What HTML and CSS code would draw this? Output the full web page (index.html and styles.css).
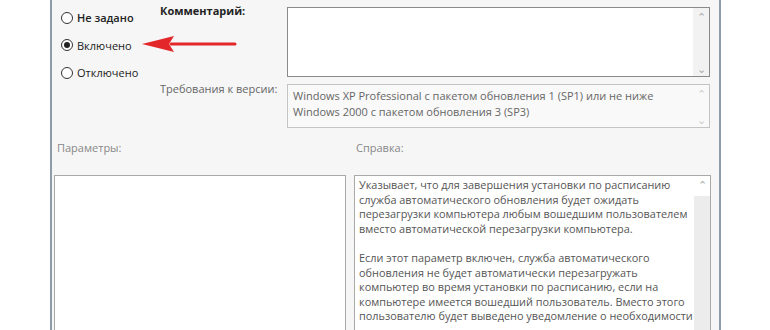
FILE: index.html
```html
<!DOCTYPE html>
<html lang="ru">
<head>
<meta charset="utf-8">
<link rel="stylesheet" href="styles.css">
</head>
<body>
<div class="dialog">
  <div class="top">
    <div class="radios">
      <label class="radio bold"><span class="dot"></span>Не задано</label>
      <label class="radio"><span class="dot on"></span>Включено</label>
      <label class="radio"><span class="dot"></span>Отключено</label>
    </div>
    <div class="fields">
      <div class="row row-comment">
        <div class="flabel bold">Комментарий:</div>
        <div class="box comment">
          <div class="box-body"></div>
          <div class="sbar"><span class="up">&#8963;</span><span class="down">&#8964;</span></div>
        </div>
      </div>
      <div class="row row-version">
        <div class="flabel">Требования к версии:</div>
        <div class="box version">
          <div class="box-body vtext">Windows XP Professional с пакетом обновления 1 (SP1) или не ниже<br>Windows 2000 с пакетом обновления 3 (SP3)</div>
          <div class="sbar light"><span class="up">&#8963;</span><span class="down">&#8964;</span></div>
        </div>
      </div>
    </div>
  </div>
  <div class="lower">
    <div class="col col-params">
      <div class="sec-label">Параметры:</div>
      <div class="box params"></div>
    </div>
    <div class="col col-help">
      <div class="sec-label">Справка:</div>
      <div class="box help">
        <div class="box-body htext">
          <p>Указывает, что для завершения установки по расписанию служба автоматического обновления будет ожидать перезагрузки компьютера любым вошедшим пользователем вместо автоматической перезагрузки компьютера.</p>
          <p>Если этот параметр включен, служба автоматического обновления не будет автоматически перезагружать компьютер во время установки по расписанию, если на компьютере имеется вошедший пользователь. Вместо этого пользователю будет выведено уведомление о необходимости</p>
        </div>
        <div class="sbar track"><span class="up">&#8963;</span></div>
      </div>
    </div>
  </div>
  <svg class="arrow" width="96" height="20" viewBox="0 0 96 20">
    <path d="M30 10 L94 10" stroke="#e3262a" stroke-width="3" stroke-linecap="round"/>
    <path d="M1 10 L33 2 L28 10 L33 18 Z" fill="#e3262a"/>
  </svg>
</div>
</body>
</html>
```
FILE: styles.css
```css
html, body {
  margin: 0;
  padding: 0;
  background: #ffffff;
}
body {
  width: 770px;
  height: 330px;
  overflow: hidden;
  font-family: "Open Sans", "Noto Sans", sans-serif;
  font-size: 11px;
  color: #333;
}
.dialog {
  position: relative;
  margin-left: 50px;
  width: 667px;
  height: 330px;
  overflow: hidden;
  border-left: 2px solid #8e9caa;
  border-right: 2px solid #8e9caa;
  background: #f6f6f6;
}
.top {
  display: flex;
}
.radios {
  width: 108px;
  display: flex;
  flex-direction: column;
  gap: 10.5px;
  padding-top: 9px;
  padding-left: 9px;
  box-sizing: border-box;
}
.radio {
  display: flex;
  align-items: center;
  gap: 4px;
  height: 17px;
  color: #222;
  white-space: nowrap;
}
.bold { font-weight: 700; }
.radio.bold { font-weight: 600; }
.dot {
  width: 10px;
  height: 10px;
  border: 1px solid #333;
  border-radius: 50%;
  background: #fff;
  display: inline-flex;
  align-items: center;
  justify-content: center;
  flex: none;
}
.dot.on::after {
  content: "";
  width: 6px;
  height: 6px;
  border-radius: 50%;
  background: #222;
}
.fields {
  display: flex;
  flex-direction: column;
  gap: 7px;
  padding-top: 7px;
}
.row {
  display: flex;
}
.flabel {
  width: 127px;
  color: #333;
  line-height: 14px;
}
.row-comment .flabel { margin-top: -3px; color: #222; }
.row-version .flabel { margin-top: -2px; color: #666; }
.box {
  background: #fff;
  border: 1px solid #a9a9a9;
  box-sizing: border-box;
  display: flex;
}
.comment {
  width: 423px;
  height: 70px;
  border-color: #8a8a8a;
}
.version {
  width: 423px;
  height: 44px;
  border-color: #c4c4c4;
  background: #f9f9f9;
}
.box-body {
  flex: 1;
}
.vtext {
  padding: 3px 0 0 5px;
  line-height: 16px;
  color: #666;
}
.sbar {
  width: 16px;
  display: flex;
  flex-direction: column;
  justify-content: space-between;
  align-items: center;
  color: #aaa;
  font-size: 11px;
  line-height: 10px;
  padding: 4px 0 2px;
  background: #f2f2f2;
}
.sbar.light { background: transparent; color: #ccc; }
.sbar.track {
  justify-content: flex-start;
  background: linear-gradient(#fff 0 20px, #ececec 20px);
}
.lower {
  display: flex;
  padding-left: 2px;
  margin-top: 13px;
  gap: 8px;
}
.col { display: flex; flex-direction: column; }
.sec-label {
  height: 34px;
  color: #888;
  padding-left: 3px;
  line-height: 14px;
}
.col-help .sec-label { padding-left: 2px; }
.params {
  width: 292px;
  height: 200px;
}
.help {
  width: 357px;
  height: 200px;
}
.htext {
  padding: 2px 0 0 4px;
  color: #555;
  line-height: 14.6px;
  font-size: 10.9px;
}
.htext p { margin: 0 0 14.6px; }
.arrow {
  position: absolute;
  left: 89px;
  top: 34px;
}
```
